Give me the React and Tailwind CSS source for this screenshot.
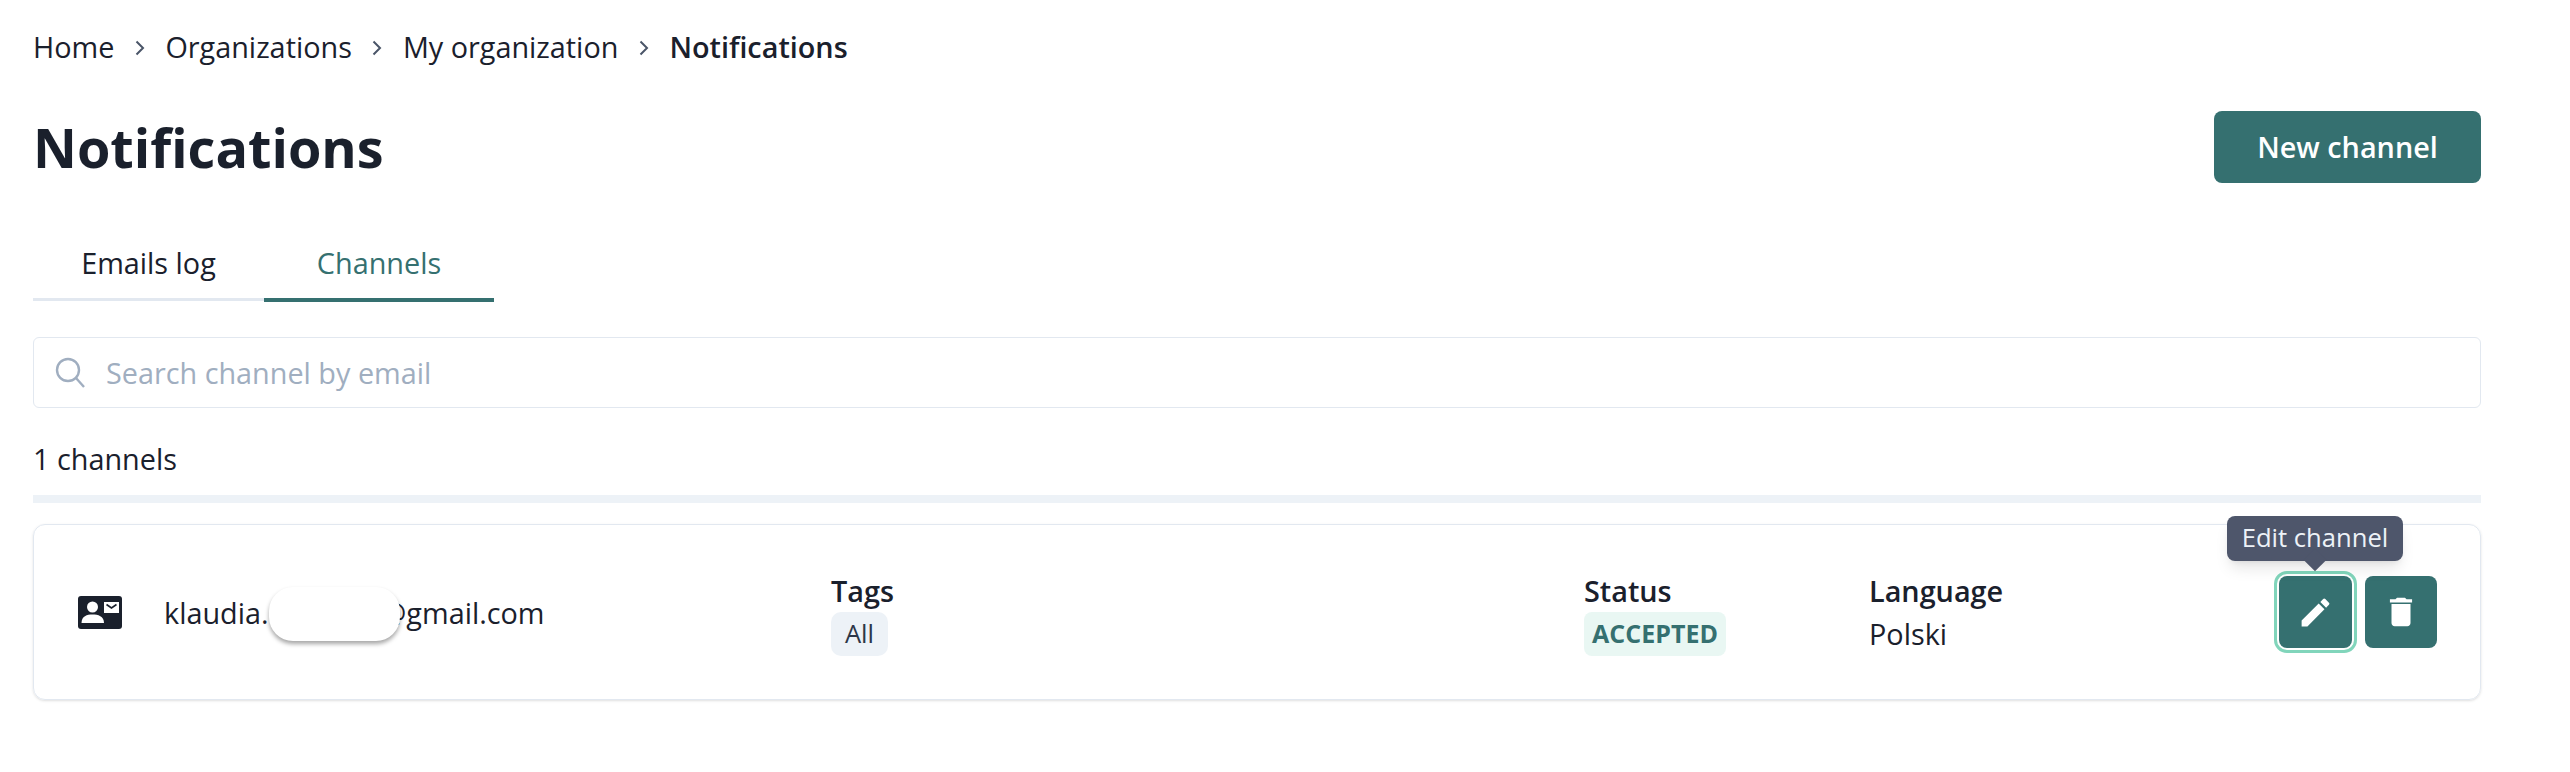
import { MdEdit, MdDelete } from "react-icons/md";

function Chevron() {
  return (
    <svg width="12" height="16" viewBox="0 0 12 16" fill="none" className="mx-[19.5px] mt-[2px] text-[#4a5568]">
      <path d="M2.5 1.5 L9 8 L2.5 14.5" stroke="currentColor" strokeWidth="2" />
    </svg>
  );
}

function ContactIcon() {
  return (
    <svg width="44" height="33" viewBox="0 0 44 33" className="shrink-0">
      <rect x="0" y="0" width="44" height="33" rx="3" fill="#1a202c" />
      <circle cx="14.5" cy="11" r="5.5" fill="#fff" />
      <path d="M3.5 27 C3.5 20 9 18.5 14.5 18.5 C20 18.5 26 20 26 27 Z" fill="#fff" />
      <rect x="26" y="6" width="15" height="11" fill="#fff" />
      <path d="M28.5 8.5 L33.5 12 L38.5 8.5" stroke="#1a202c" strokeWidth="1.6" fill="none" />
    </svg>
  );
}

export default function App() {
  return (
    <div className="min-h-[772px] bg-white pl-[33px] pr-[89px] text-[#1a202c] text-[28.8px] font-['Open_Sans',sans-serif]">
      {/* BREADCRUMB */}
      <div className="flex items-center pt-[25px] h-[69px] leading-[42px]">
        <span>Home</span>
        <Chevron />
        <span>Organizations</span>
        <Chevron />
        <span>My organization</span>
        <Chevron />
        <span className="font-semibold">Notifications</span>
      </div>

      {/* HEADER */}
      <div className="flex items-center justify-between mt-[42px] h-[72px]">
        <h1 className="text-[54px] leading-[72px] font-bold">Notifications</h1>
        <button className="w-[267px] h-[72px] rounded-[8px] bg-[#357070] text-white font-semibold">
          New channel
        </button>
      </div>

      {/* TABS */}
      <div className="flex mt-[47px] h-[72px]">
        <div className="w-[231px] h-[71px] pb-[2px] border-b-[3px] border-[#e2e8f0] flex items-center justify-center">
          Emails log
        </div>
        <div className="w-[230px] h-[72px] pb-[3px] border-b-[4px] border-[#357070] text-[#357070] flex items-center justify-center">
          Channels
        </div>
      </div>

      {/* SEARCH */}
      <div className="flex items-center mt-[35px] h-[71px] border border-[#e2e8f0] rounded-[6px] pl-[20px] text-[#a0aec0]">
        <svg width="32" height="32" viewBox="0 0 32 32" fill="none" stroke="#a0aec0" strokeWidth="2.4" className="shrink-0">
          <circle cx="14" cy="13" r="11" />
          <path d="M22 21 L30 30" />
        </svg>
        <span className="ml-[20px]">Search channel by email</span>
      </div>

      {/* COUNT */}
      <div className="mt-[30px] h-[42px] leading-[42px]">1 channels</div>
      <div className="mt-[15px] h-[8px] bg-[#edf2f7]" />

      {/* CARD */}
      <div className="mt-[21px] h-[176px] flex items-center pl-[44px] pr-[43px] border border-[#e2e8f0] rounded-[12px] shadow-sm">
        <ContactIcon />
        <div className="relative w-[667px] ml-[42px] mt-[2px] whitespace-nowrap">
          klaudia.<span className="inline-block w-[112px]" />@gmail.com
          {/* blurred part of the address */}
          <div className="absolute left-[105px] top-[-4px] w-[131px] h-[54px] bg-white rounded-[24px] shadow-[0_3px_4px_rgba(0,0,0,0.35)]" />
        </div>

        <div className="w-[753px] mt-[6px] flex flex-col items-start">
          <div className="font-semibold h-[38px] leading-[34px]">Tags</div>
          <span className="flex items-center justify-center w-[57px] h-[44px] rounded-[10px] bg-[#edf2f7] text-[25.6px] text-[#2d3748]">
            All
          </span>
        </div>

        <div className="w-[285px] mt-[6px] flex flex-col items-start">
          <div className="font-semibold h-[38px] leading-[34px]">Status</div>
          <span className="flex items-center justify-center w-[142px] h-[44px] rounded-[8px] bg-[#e9f7f3] text-[#357070] text-[25px] font-bold">
            ACCEPTED
          </span>
        </div>

        <div className="flex-1 mt-[6px] flex flex-col items-start">
          <div className="font-semibold h-[38px] leading-[34px]">Language</div>
          <div className="h-[44px] leading-[44px]">Polski</div>
        </div>

        <div className="flex gap-[13px]">
          <div className="relative">
            <button className="w-[73px] h-[72px] rounded-[8px] bg-[#357070] text-white flex items-center justify-center ring-2 ring-white outline-[3px] outline-offset-[2px] outline-[#81d5bb]">
              <MdEdit size={37} />
            </button>
            {/* TOOLTIP */}
            <div className="absolute left-[-52px] top-[-60px] w-[176px] h-[45px] rounded-[8px] bg-[#4e566b] text-[#edf2f7] text-[25.6px] flex items-center justify-center whitespace-nowrap shadow-lg">
              Edit channel
              <div className="absolute left-[80px] bottom-[-7px] w-[16px] h-[16px] rotate-45 bg-[#4e566b]" />
            </div>
          </div>
          <button className="w-[72px] h-[72px] rounded-[8px] bg-[#357070] text-white flex items-center justify-center">
            <MdDelete size={38} />
          </button>
        </div>
      </div>
    </div>
  );
}
